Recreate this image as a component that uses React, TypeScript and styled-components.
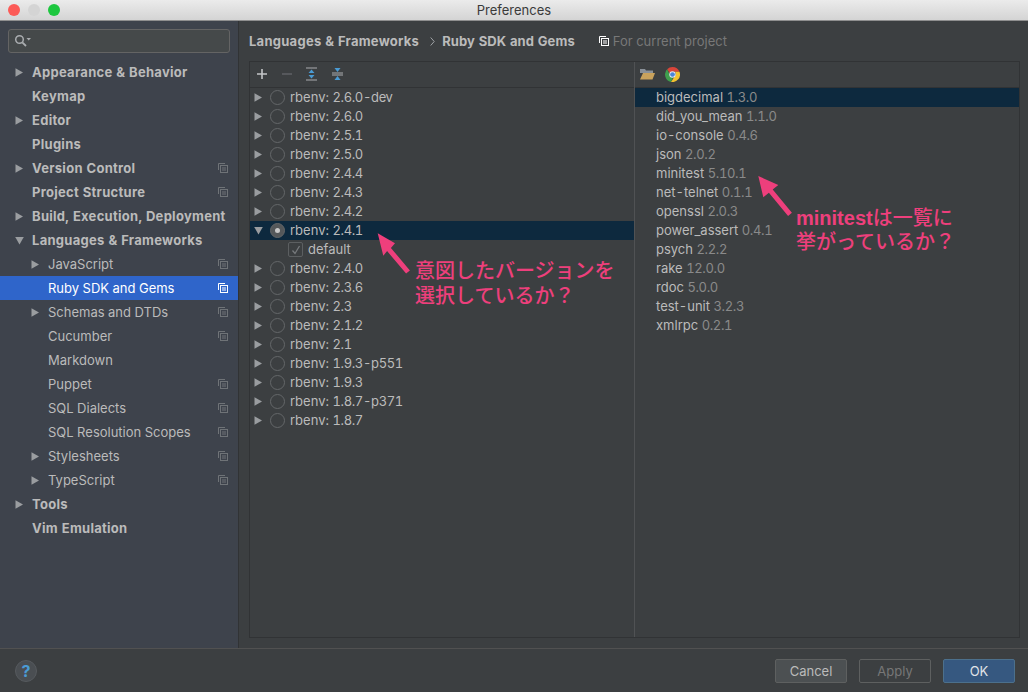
import React from 'react';
import styled, { createGlobalStyle } from 'styled-components';

const GlobalStyle = createGlobalStyle`
  html, body {
    margin: 0;
    padding: 0;
    background: #3c3f41;
  }
  body {
    font-family: 'Inter', 'Liberation Sans', 'Noto Sans CJK JP', sans-serif;
    font-size: 13px;
    font-variant-numeric: tabular-nums;
    color: #bbbbbb;
  }
`;

type NavItem = {
  label: string;
  arrow?: 'right' | 'down';
  child?: boolean;
  copy?: boolean;
  selected?: boolean;
};

const navItems: NavItem[] = [
  { label: 'Appearance & Behavior', arrow: 'right' },
  { label: 'Keymap' },
  { label: 'Editor', arrow: 'right' },
  { label: 'Plugins' },
  { label: 'Version Control', arrow: 'right', copy: true },
  { label: 'Project Structure', copy: true },
  { label: 'Build, Execution, Deployment', arrow: 'right' },
  { label: 'Languages & Frameworks', arrow: 'down' },
  { label: 'JavaScript', arrow: 'right', child: true, copy: true },
  { label: 'Ruby SDK and Gems', child: true, copy: true, selected: true },
  { label: 'Schemas and DTDs', arrow: 'right', child: true, copy: true },
  { label: 'Cucumber', child: true, copy: true },
  { label: 'Markdown', child: true },
  { label: 'Puppet', child: true, copy: true },
  { label: 'SQL Dialects', child: true, copy: true },
  { label: 'SQL Resolution Scopes', child: true, copy: true },
  { label: 'Stylesheets', arrow: 'right', child: true, copy: true },
  { label: 'TypeScript', arrow: 'right', child: true, copy: true },
  { label: 'Tools', arrow: 'right' },
  { label: 'Vim Emulation' },
];

const sdksBefore = ['2.6.0-dev', '2.6.0', '2.5.1', '2.5.0', '2.4.4', '2.4.3', '2.4.2'];
const sdksAfter = ['2.4.0', '2.3.6', '2.3', '2.1.2', '2.1', '1.9.3-p551', '1.9.3', '1.8.7-p371', '1.8.7'];

const gems = [
  ['bigdecimal', '1.3.0'],
  ['did_you_mean', '1.1.0'],
  ['io-console', '0.4.6'],
  ['json', '2.0.2'],
  ['minitest', '5.10.1'],
  ['net-telnet', '0.1.1'],
  ['openssl', '2.0.3'],
  ['power_assert', '0.4.1'],
  ['psych', '2.2.2'],
  ['rake', '12.0.0'],
  ['rdoc', '5.0.0'],
  ['test-unit', '3.2.3'],
  ['xmlrpc', '0.2.1'],
];

function CopyIcon({ bright }: { bright?: boolean }) {
  const c = bright ? '#ffffff' : '#6f7377';
  return (
    <svg width="10" height="10" viewBox="0 0 10 10" fill="none" stroke={c} strokeWidth="1">
      <path d="M0.5 7V0.5H7" />
      <rect x="2.5" y="2.5" width="7" height="7" />
      <path d="M4 5H8M4 7H8" />
    </svg>
  );
}

function Arrow({ dir }: { dir: 'right' | 'down' }) {
  return (
    <svg width="9" height="9" viewBox="0 0 9 9" fill="#9a9da0">
      {dir === 'right' ? <path d="M0.5 0.2L8 4.5L0.5 8.8Z" /> : <path d="M0.2 1H8.8L4.5 8.5Z" />}
    </svg>
  );
}

function ChromeIcon() {
  return (
    <svg width="15" height="15" viewBox="0 0 14 14">
      <path d="M7 0A7 7 0 0 1 13.5 4.5H7A2.6 2.6 0 0 0 4.6 6L2 2.2A7 7 0 0 1 7 0Z" fill="#d9453a" />
      <path d="M2 2.2L4.8 8A2.6 2.6 0 0 0 7.5 9.5L5.6 13.9A7 7 0 0 1 2 2.2Z" fill="#3f9e4d" />
      <path d="M13.5 4.5A7 7 0 0 1 5.6 13.9L9.2 8.4A2.6 2.6 0 0 0 9 4.5Z" fill="#f2c230" />
      <circle cx="7" cy="7" r="3" fill="#e8eef5" />
      <circle cx="7" cy="7" r="2.2" fill="#4a86d8" />
    </svg>
  );
}

export default function App() {
  return (
    <Window>
      <GlobalStyle />
      <TitleBar>
        <Lights>
          <Light color="#fc5b57" />
          <Light color="#d4d4d4" />
          <Light color="#1dc73f" />
        </Lights>
        <Title>Preferences</Title>
      </TitleBar>
      <Body>
        <Sidebar>
          <SearchBox>
            <svg width="18" height="14" viewBox="0 0 18 14" fill="none">
              <circle cx="5.5" cy="5.5" r="3.8" stroke="#a9acaf" strokeWidth="1.5" />
              <path d="M8.3 8.3L12 12" stroke="#a9acaf" strokeWidth="1.8" />
              <path d="M12.5 4H17L14.7 6.5Z" fill="#a9acaf" />
            </svg>
          </SearchBox>
          <NavList>
            {navItems.map((item) => (
              <NavRow key={item.label} $selected={item.selected}>
                <NavArrow $child={item.child}>{item.arrow && <Arrow dir={item.arrow} />}</NavArrow>
                <NavLabel $child={item.child} $selected={item.selected}>
                  {item.label}
                </NavLabel>
                {item.copy && (
                  <NavCopy>
                    <CopyIcon bright={item.selected} />
                  </NavCopy>
                )}
              </NavRow>
            ))}
          </NavList>
        </Sidebar>
        <Main>
          <Breadcrumb>
            <Crumb>Languages &amp; Frameworks</Crumb>
            <Chevron width="5" height="9" viewBox="0 0 5 9" fill="none" stroke="#a0a3a6">
              <path d="M0.7 0.5L4.2 4.5L0.7 8.5" />
            </Chevron>
            <CurrentCrumb>Ruby SDK and Gems</CurrentCrumb>
            <ProjectNote>
              <CopyIcon bright />
              For current project
            </ProjectNote>
          </Breadcrumb>
          <Panel>
            <LeftPane>
              <Toolbar>
                <svg width="12" height="12" viewBox="0 0 12 12" stroke="#c4c6c8" strokeWidth="1.6">
                  <path d="M6 1V11M1 6H11" />
                </svg>
                <svg width="12" height="12" viewBox="0 0 12 12" stroke="#5d6063" strokeWidth="1.6">
                  <path d="M1 6H11" />
                </svg>
                <svg width="13" height="14" viewBox="0 0 13 14">
                  <path d="M1 1H12M1 13H12" stroke="#a9acaf" strokeWidth="1.2" />
                  <path d="M6.5 2.5L9.5 6H3.5ZM6.5 11.5L3.5 8H9.5Z" fill="#4a9bd4" />
                </svg>
                <svg width="13" height="14" viewBox="0 0 13 14">
                  <path d="M1 6H12M1 8H12" stroke="#a9acaf" strokeWidth="1" />
                  <path d="M6.5 5L3.5 1H9.5ZM6.5 9L9.5 13H3.5Z" fill="#4a9bd4" />
                </svg>
              </Toolbar>
              {sdksBefore.map((v) => (
                <SdkRow key={v}>
                  <Arrow dir="right" />
                  <Radio />
                  <span>
                    rbenv: <SdkVersion>{v}</SdkVersion>
                  </span>
                </SdkRow>
              ))}
              <SdkRow $selected>
                <Arrow dir="down" />
                <Radio $checked />
                <span>
                  rbenv: <SdkVersion>2.4.1</SdkVersion>
                </span>
              </SdkRow>
              <GemsetRow>
                <CheckBox>
                  <svg width="10" height="10" viewBox="0 0 10 10" fill="none" stroke="#777a7d" strokeWidth="1.3">
                    <path d="M1.5 5.5L4 8.5L8.5 1" />
                  </svg>
                </CheckBox>
                <span>default</span>
              </GemsetRow>
              {sdksAfter.map((v) => (
                <SdkRow key={v}>
                  <Arrow dir="right" />
                  <Radio />
                  <span>
                    rbenv: <SdkVersion>{v}</SdkVersion>
                  </span>
                </SdkRow>
              ))}
            </LeftPane>
            <RightPane>
              <GemToolbar>
                <svg width="15" height="12" viewBox="0 0 15 12">
                  <path d="M0 1H5L6 2.5H13V5H0Z" fill="#8a9199" />
                  <path d="M3 5H15L12.5 11.5H0Z" fill="#c9a25c" />
                </svg>
                <ChromeIcon />
              </GemToolbar>
              {gems.map(([name, version], i) => (
                <GemRow key={name} $selected={i === 0}>
                  {name} <GemVersion>{version}</GemVersion>
                </GemRow>
              ))}
            </RightPane>
          </Panel>
        </Main>
      </Body>
      <Footer>
        <HelpButton>?</HelpButton>
        <FooterButtons>
          <Button>Cancel</Button>
          <Button $disabled>Apply</Button>
          <Button $primary>OK</Button>
        </FooterButtons>
      </Footer>
      <NoteOne>
        意図したバージョンを
        <br />
        選択しているか？
      </NoteOne>
      <NoteTwo>
        <NoteLatin>minitest</NoteLatin>は一覧に
        <br />
        挙がっているか？
      </NoteTwo>
      <NoteArrowOne width="36" height="44" viewBox="0 0 36 44">
        <path d="M0.7 0.3L18 10.3L13.9 14.9L32.9 37.4L29.1 40.6L10.1 18.1L6.3 22.7Z" fill="#ee3f7c" />
      </NoteArrowOne>
      <NoteArrowTwo width="36" height="42" viewBox="0 0 36 42">
        <path d="M1.3 0L21.3 9L15.7 13.6L34.9 36.7L31.1 39.9L11.9 16.8L6.3 21.3Z" fill="#ee3f7c" />
      </NoteArrowTwo>
    </Window>
  );
}

const Window = styled.div`
  position: relative;
  width: 1028px;
  height: 692px;
  overflow: hidden;
  display: flex;
  flex-direction: column;
  background: #3c3f41;
`;

const TitleBar = styled.div`
  position: relative;
  height: 21px;
  flex: none;
  display: flex;
  align-items: center;
  justify-content: center;
  background: linear-gradient(#ebebeb, #d4d4d4);
  border-bottom: 1px solid #8f8f8f;
  box-sizing: border-box;
`;

const Lights = styled.div`
  position: absolute;
  left: 8px;
  top: 4px;
  display: flex;
  gap: 8px;
`;

const Light = styled.div<{ color: string }>`
  width: 12px;
  height: 12px;
  border-radius: 50%;
  background: ${(p) => p.color};
`;

const Title = styled.div`
  font-size: 13px;
  color: #3a3a3a;
`;

const Body = styled.div`
  flex: 1;
  display: flex;
  min-height: 0;
`;

const Sidebar = styled.div`
  width: 238px;
  flex: none;
  box-sizing: border-box;
  background: #3e434c;
  padding: 8px 0 0;
`;

const SearchBox = styled.div`
  margin: 0 8px;
  height: 24px;
  box-sizing: border-box;
  display: flex;
  align-items: center;
  padding-left: 5px;
  background: #45494a;
  border: 1px solid #646464;
  border-radius: 3px;
`;

const NavList = styled.div`
  margin-top: 7px;
`;

const NavRow = styled.div<{ $selected?: boolean }>`
  height: 24px;
  display: flex;
  align-items: center;
  background: ${(p) => (p.$selected ? '#2f65ca' : 'transparent')};
`;

const NavArrow = styled.div<{ $child?: boolean }>`
  width: 9px;
  height: 9px;
  display: flex;
  margin-left: ${(p) => (p.$child ? '31px' : '15px')};
  margin-right: 8px;
`;

const NavLabel = styled.div<{ $child?: boolean; $selected?: boolean }>`
  font-size: 13px;
  font-weight: ${(p) => (p.$child ? 400 : 700)};
  letter-spacing: ${(p) => (p.$child ? '0' : '0.28px')};
  color: ${(p) => (p.$selected ? '#ffffff' : '#bbbbbb')};
  white-space: nowrap;
`;

const NavCopy = styled.div`
  margin-left: auto;
  margin-right: 10px;
  display: flex;
`;

const Main = styled.div`
  flex: 1;
  min-width: 0;
  box-sizing: border-box;
  border-left: 1px solid #313335;
  padding: 0 8px 10px 10px;
  display: flex;
  flex-direction: column;
`;

const Breadcrumb = styled.div`
  height: 40px;
  flex: none;
  display: flex;
  align-items: center;
  gap: 10px;
`;

const Crumb = styled.span`
  font-weight: 700;
  letter-spacing: 0.26px;
  color: #bbbbbb;
`;

const CurrentCrumb = styled(Crumb)`
  letter-spacing: 0.12px;
`;

const Chevron = styled.svg`
  margin: 0 -3px 0 1px;
`;

const ProjectNote = styled.span`
  display: flex;
  align-items: center;
  gap: 4px;
  margin-left: 14px;
  color: #787878;
`;

const Panel = styled.div`
  flex: 1;
  display: flex;
  min-height: 0;
  border: 1px solid #313335;
`;

const LeftPane = styled.div`
  width: 384px;
  flex: none;
  border-right: 1px solid #505254;
`;

const RightPane = styled.div`
  flex: 1;
  min-width: 0;
`;

const Toolbar = styled.div`
  height: 26px;
  box-sizing: border-box;
  display: flex;
  align-items: center;
  gap: 12.6px;
  padding: 0 0 1px 6px;
  border-bottom: 1px solid #313335;
`;

const GemToolbar = styled(Toolbar)`
  gap: 10px;
  padding-left: 5px;
`;

const SdkRow = styled.div<{ $selected?: boolean }>`
  height: 19px;
  line-height: 19px;
  display: flex;
  align-items: center;
  padding-left: 4px;
  white-space: nowrap;
  background: ${(p) => (p.$selected ? '#0d293e' : 'transparent')};
`;

const SdkVersion = styled.span`
  letter-spacing: -0.35px;
`;

const Radio = styled.div<{ $checked?: boolean }>`
  position: relative;
  width: 15px;
  height: 15px;
  box-sizing: border-box;
  margin: 0 5px 0 7px;
  border-radius: 50%;
  border: 1px solid #646769;
  background: ${(p) => (p.$checked ? '#55585a' : 'transparent')};
  &::after {
    content: '';
    display: ${(p) => (p.$checked ? 'block' : 'none')};
    position: absolute;
    left: 4px;
    top: 4px;
    width: 5px;
    height: 5px;
    border-radius: 50%;
    background: #c8c8c8;
  }
`;

const GemsetRow = styled.div`
  height: 19px;
  line-height: 19px;
  display: flex;
  align-items: center;
  gap: 5px;
  padding-left: 38px;
`;

const CheckBox = styled.div`
  width: 15px;
  height: 15px;
  box-sizing: border-box;
  display: flex;
  align-items: center;
  justify-content: center;
  border: 1px solid #5c5f61;
  border-radius: 2px;
`;

const GemRow = styled.div<{ $selected?: boolean }>`
  height: 19px;
  line-height: 19px;
  padding-left: 21px;
  white-space: nowrap;
  background: ${(p) => (p.$selected ? '#0d293e' : 'transparent')};
`;

const GemVersion = styled.span`
  color: #8a8a8a;
  letter-spacing: -0.35px;
`;

const Footer = styled.div`
  height: 44px;
  flex: none;
  box-sizing: border-box;
  display: flex;
  align-items: center;
  justify-content: space-between;
  padding: 0 13px 0 15px;
  background: #3c3f41;
  border-top: 1px solid #515151;
`;

const HelpButton = styled.div`
  width: 22px;
  height: 22px;
  box-sizing: border-box;
  display: flex;
  align-items: center;
  justify-content: center;
  border-radius: 50%;
  border: 1px solid #565a5e;
  background: #4a4e52;
  color: #4a9bd4;
  font-size: 16px;
  font-weight: 700;
`;

const FooterButtons = styled.div`
  display: flex;
  gap: 12px;
`;

const Button = styled.div<{ $primary?: boolean; $disabled?: boolean }>`
  width: 72px;
  height: 24px;
  box-sizing: border-box;
  display: flex;
  align-items: center;
  justify-content: center;
  border-radius: 2px;
  border: 1px solid ${(p) => (p.$primary ? '#4c708c' : '#5e6060')};
  background: ${(p) => (p.$primary ? '#365880' : p.$disabled ? 'transparent' : '#4c5052')};
  color: ${(p) => (p.$primary ? '#e0e4e8' : p.$disabled ? '#777777' : '#bbbbbb')};
`;

const Note = styled.div`
  position: absolute;
  color: #ee3f7c;
  font-size: 20px;
  font-weight: 500;
  white-space: nowrap;
  font-family: 'Liberation Sans', 'Noto Sans CJK JP', sans-serif;
`;

const NoteOne = styled(Note)`
  left: 415px;
  top: 259px;
  line-height: 25px;
`;

const NoteTwo = styled(Note)`
  left: 796px;
  top: 206px;
  line-height: 24px;
`;

const NoteLatin = styled.span`
  font-weight: 700;
`;

const NoteArrowOne = styled.svg`
  position: absolute;
  left: 377px;
  top: 233px;
`;

const NoteArrowTwo = styled.svg`
  position: absolute;
  left: 757px;
  top: 176px;
`;
